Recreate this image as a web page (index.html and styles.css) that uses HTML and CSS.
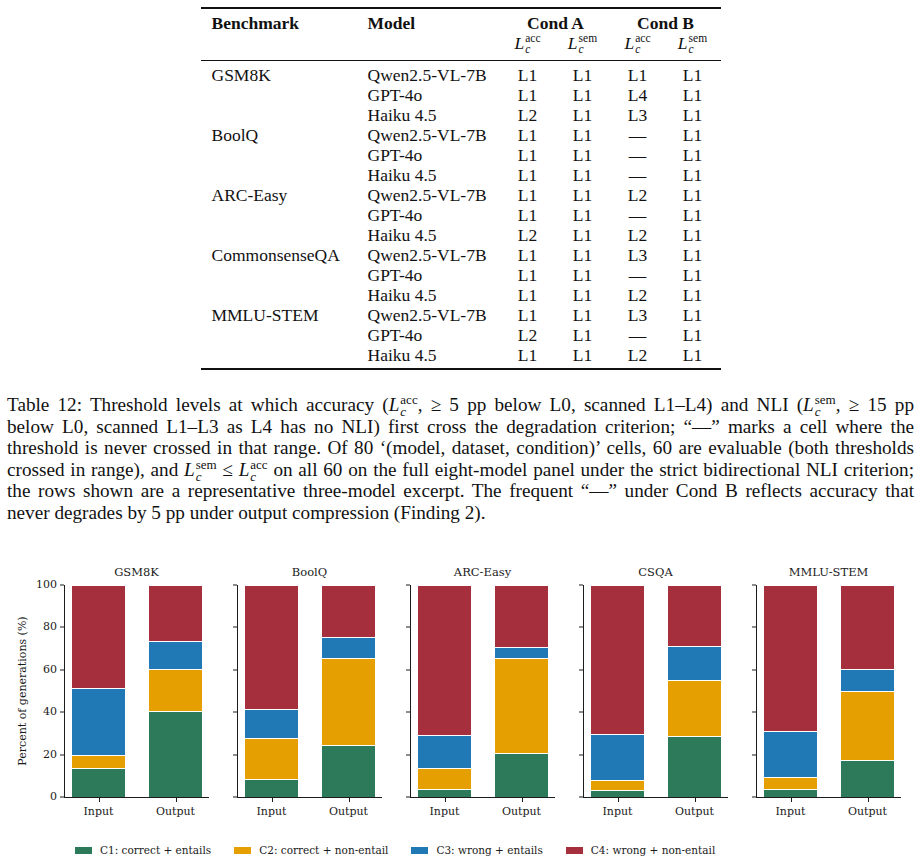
FILE: index.html
```html
<!DOCTYPE html>
<html lang="en">
<head>
  <meta charset="UTF-8" />
  <meta name="viewport" content="width=device-width, initial-scale=1.0"/>
  <title>Table 12 and outcome breakdown</title>
  <link rel="stylesheet" href="styles.css">
</head>
<body>
  <div class="page">
    <table class="levels">
      <colgroup>
        <col class="w-bench">
        <col class="w-model">
        <col class="w-a">
        <col class="w-b">
        <col class="w-a">
        <col class="w-b">
      </colgroup>
      <thead>
        <tr class="head-main">
          <th class="left">Benchmark</th>
          <th class="left">Model</th>
          <th colspan="2">Cond A</th>
          <th colspan="2">Cond B</th>
        </tr>
        <tr class="head-sub">
          <th></th>
          <th></th>
          <th><span class="lc"><i>L</i><span class="ss"><span>acc</span><i>c</i></span></span></th>
          <th><span class="lc"><i>L</i><span class="ss"><span>sem</span><i>c</i></span></span></th>
          <th><span class="lc"><i>L</i><span class="ss"><span>acc</span><i>c</i></span></span></th>
          <th><span class="lc"><i>L</i><span class="ss"><span>sem</span><i>c</i></span></span></th>
        </tr>
      </thead>
      <tbody>
        <tr><td class="left">GSM8K</td><td class="left">Qwen2.5-VL-7B</td><td>L1</td><td>L1</td><td>L1</td><td>L1</td></tr>
        <tr><td></td><td class="left">GPT-4o</td><td>L1</td><td>L1</td><td>L4</td><td>L1</td></tr>
        <tr><td></td><td class="left">Haiku 4.5</td><td>L2</td><td>L1</td><td>L3</td><td>L1</td></tr>
        <tr><td class="left">BoolQ</td><td class="left">Qwen2.5-VL-7B</td><td>L1</td><td>L1</td><td>—</td><td>L1</td></tr>
        <tr><td></td><td class="left">GPT-4o</td><td>L1</td><td>L1</td><td>—</td><td>L1</td></tr>
        <tr><td></td><td class="left">Haiku 4.5</td><td>L1</td><td>L1</td><td>—</td><td>L1</td></tr>
        <tr><td class="left">ARC-Easy</td><td class="left">Qwen2.5-VL-7B</td><td>L1</td><td>L1</td><td>L2</td><td>L1</td></tr>
        <tr><td></td><td class="left">GPT-4o</td><td>L1</td><td>L1</td><td>—</td><td>L1</td></tr>
        <tr><td></td><td class="left">Haiku 4.5</td><td>L2</td><td>L1</td><td>L2</td><td>L1</td></tr>
        <tr><td class="left">CommonsenseQA</td><td class="left">Qwen2.5-VL-7B</td><td>L1</td><td>L1</td><td>L3</td><td>L1</td></tr>
        <tr><td></td><td class="left">GPT-4o</td><td>L1</td><td>L1</td><td>—</td><td>L1</td></tr>
        <tr><td></td><td class="left">Haiku 4.5</td><td>L1</td><td>L1</td><td>L2</td><td>L1</td></tr>
        <tr><td class="left">MMLU-STEM</td><td class="left">Qwen2.5-VL-7B</td><td>L1</td><td>L1</td><td>L3</td><td>L1</td></tr>
        <tr><td></td><td class="left">GPT-4o</td><td>L2</td><td>L1</td><td>—</td><td>L1</td></tr>
        <tr><td></td><td class="left">Haiku 4.5</td><td>L1</td><td>L1</td><td>L2</td><td>L1</td></tr>
      </tbody>
    </table>

    <p class="caption">
      <span class="ln">Table 12: Threshold levels at which accuracy (<span class="lc"><i>L</i><span class="ss"><span>acc</span><i>c</i></span></span>, ≥ 5 pp below L0, scanned L1–L4) and NLI (<span class="lc"><i>L</i><span class="ss"><span>sem</span><i>c</i></span></span>, ≥ 15 pp</span>
      <span class="ln">below L0, scanned L1–L3 as L4 has no NLI) first cross the degradation criterion; “—” marks a cell where the</span>
      <span class="ln">threshold is never crossed in that range. Of 80 ‘(model, dataset, condition)’ cells, 60 are evaluable (both thresholds</span>
      <span class="ln">crossed in range), and <span class="lc"><i>L</i><span class="ss"><span>sem</span><i>c</i></span></span> ≤ <span class="lc"><i>L</i><span class="ss"><span>acc</span><i>c</i></span></span> on all 60 on the full eight-model panel under the strict bidirectional NLI criterion;</span>
      <span class="ln">the rows shown are a representative three-model excerpt. The frequent “—” under Cond B reflects accuracy that</span>
      <span class="ln last">never degrades by 5 pp under output compression (Finding 2).</span>
    </p>

    <div class="figure">
      <div class="panels" id="panels"></div>
      <div class="legend">
        <div class="item"><span class="swatch c1"></span>C1: correct + entails</div>
        <div class="item"><span class="swatch c2"></span>C2: correct + non-entail</div>
        <div class="item"><span class="swatch c3"></span>C3: wrong + entails</div>
        <div class="item"><span class="swatch c4"></span>C4: wrong + non-entail</div>
      </div>
    </div>
  </div>

  <script>
    // share of generations per category (C1..C4), bottom to top
    const data = [
      { name: "GSM8K", bars: [[13.7, 6.3, 31.2, 48.8], [40.5, 19.7, 13.3, 26.5]] },
      { name: "BoolQ", bars: [[8.5, 19.4, 13.8, 58.3], [24.6, 40.8, 10.2, 24.4]] },
      { name: "ARC-Easy", bars: [[3.8, 9.7, 15.8, 70.7], [20.8, 44.6, 5.3, 29.3]] },
      { name: "CSQA", bars: [[3.1, 5.1, 21.7, 70.1], [28.6, 26.5, 16.1, 28.8]] },
      { name: "MMLU-STEM", bars: [[3.8, 5.7, 21.5, 69.0], [17.6, 32.6, 10.1, 39.7]] }
    ];
    const ticks = [0, 20, 40, 60, 80, 100];
    const panels = document.getElementById("panels");

    data.forEach((d, i) => {
      let html = `<div class="title">${d.name}</div><div class="plot">`;
      if (i === 0) {
        html += `<span class="ylabel">Percent of generations (%)</span>`;
      }
      ticks.forEach((t) => {
        html += `<span class="ytick" style="bottom:${t}%"></span>`;
        if (i === 0) html += `<span class="yval" style="bottom:${t}%">${t}</span>`;
      });
      d.bars.forEach((bar) => {
        html += `<div class="bar">`;
        bar.forEach((v, k) => {
          html += `<span class="seg c${k + 1}" style="height:${v}%"></span>`;
        });
        html += `</div>`;
      });
      html += `</div><div class="xlabels"><span>Input</span><span>Output</span></div>`;

      const panel = document.createElement("div");
      panel.className = "panel";
      panel.innerHTML = html;
      panels.appendChild(panel);
    });
  </script>
</body>
</html>
```

FILE: styles.css
```css
:root {
  --ink: #111;
  --axis: #1c1c1c;
  --c1: #2d7a5b;
  --c2: #e69f00;
  --c3: #2078b4;
  --c4: #a62f3e;
}

* {
  margin: 0;
  padding: 0;
  box-sizing: border-box;
}

body {
  font-family: "Liberation Serif", "Times New Roman", serif;
  color: var(--ink);
  background: #fff;
  width: 921px;
}

.page {
  padding: 7px 7px 0;
}

/* table */

.levels {
  width: 520px;
  margin: 0 auto;
  border-collapse: collapse;
  table-layout: fixed;
  font-size: 17.5px;
  line-height: 20px;
  border-top: 2px solid var(--ink);
  border-bottom: 2px solid var(--ink);
}

.w-bench { width: 156px; }
.w-model { width: 144px; }
.w-a { width: 54px; }
.w-b { width: 56px; }

.levels th,
.levels td {
  padding: 0;
  text-align: center;
  font-weight: normal;
  white-space: nowrap;
}

.levels .left {
  text-align: left;
  padding-left: 11px;
}

.head-main th {
  font-weight: bold;
  padding-top: 4px;
}

.head-sub th {
  padding-bottom: 5px;
  border-bottom: 1px solid var(--ink);
}

.levels tbody tr:first-child td {
  padding-top: 4px;
}

.levels tbody tr:last-child td {
  padding-bottom: 3px;
}

/* L with sub/superscript */

.lc {
  white-space: nowrap;
}

.ss {
  display: inline-block;
  vertical-align: -4px;
  font-size: 11.5px;
  line-height: 11px;
  margin-left: 1px;
  text-align: left;
}

.ss > span,
.ss > i {
  display: block;
}

/* caption, one span per printed line */

.caption {
  margin-top: 24px;
  font-size: 19.2px;
  line-height: 21.5px;
}

.caption .ln {
  display: block;
  text-align: justify;
  text-align-last: justify;
}

.caption .ln.last {
  text-align-last: left;
}

.caption .ss {
  font-size: 13px;
  line-height: 12px;
  vertical-align: -5px;
  margin: -4px 0 -6px 1px;
  text-align: left;
  text-align-last: left;
}

/* figure */

.figure {
  margin-top: 42px;
  font-family: "DejaVu Serif", serif;
  font-size: 11px;
  color: #1a1a1a;
}

.panels {
  display: flex;
  gap: 28px;
  margin-left: 57px;
}

.panel {
  width: 145px;
}

.title {
  text-align: center;
  font-size: 11.5px;
  line-height: 14px;
  margin-bottom: 6px;
}

.plot {
  position: relative;
  height: 213px;
  border-left: 1px solid var(--axis);
  border-bottom: 1px solid var(--axis);
  display: flex;
  gap: 24px;
  padding-left: 7px;
}

.bar {
  position: relative;
  width: 53px;
  display: flex;
  flex-direction: column-reverse;
}

.bar::after {
  content: "";
  position: absolute;
  left: 50%;
  top: calc(100% + 1px);
  width: 1px;
  height: 4px;
  background: var(--axis);
}

.seg {
  display: block;
  border-top: 1px solid #fff;
}

.c1 { background: var(--c1); }
.c2 { background: var(--c2); }
.c3 { background: var(--c3); }
.c4 { background: var(--c4); }

.ytick {
  position: absolute;
  left: -5px;
  width: 4px;
  height: 1px;
  background: var(--axis);
  transform: translateY(50%);
}

.yval {
  position: absolute;
  right: calc(100% + 8px);
  line-height: 12px;
  transform: translateY(50%);
}

.ylabel {
  position: absolute;
  left: -42px;
  top: 50%;
  line-height: 12px;
  white-space: nowrap;
  transform: translate(-50%, -50%) rotate(-90deg);
}

.xlabels {
  display: flex;
  gap: 24px;
  padding-left: 8px;
  margin-top: 7px;
  line-height: 14px;
}

.xlabels span {
  width: 53px;
  text-align: center;
}

.legend {
  display: flex;
  align-items: center;
  gap: 23px;
  margin: 24px 0 0 68px;
  line-height: 14px;
  font-size: 10.5px;
}

.item {
  display: flex;
  align-items: center;
  gap: 8px;
}

.swatch {
  width: 17px;
  height: 7px;
}
```
